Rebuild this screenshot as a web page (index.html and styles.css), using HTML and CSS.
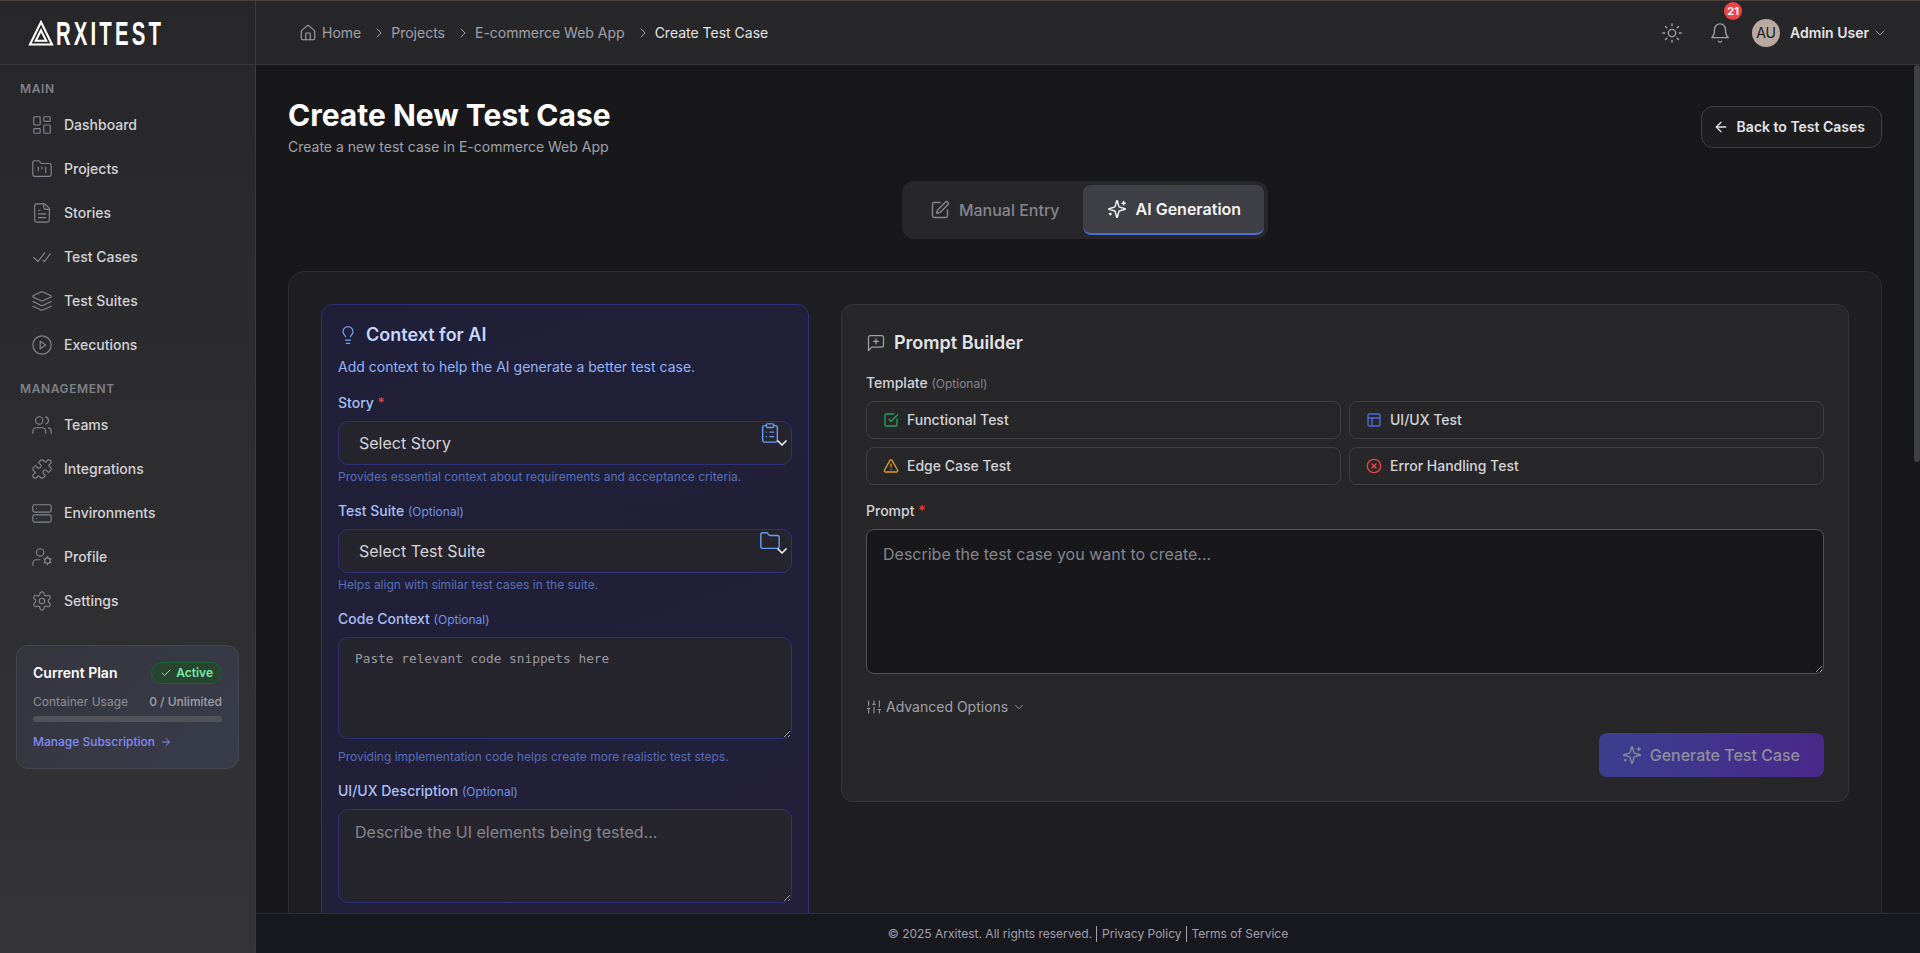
FILE: index.html
```html
<!DOCTYPE html>
<html lang="en">
  <head>
    <meta charset="UTF-8" />
    <meta name="viewport" content="width=device-width, initial-scale=1.0" />
    <title>Create Test Case - Arxitest</title>
    <link rel="stylesheet" href="styles.css">
  </head>
  <body>
    <!-- icon sprite -->
    <svg class="sprite" xmlns="http://www.w3.org/2000/svg">
      <symbol id="i-dashboard" viewBox="0 0 24 24"><rect x="3" y="3" width="7" height="9" rx="1"/><rect x="14" y="3" width="7" height="5" rx="1"/><rect x="14" y="12" width="7" height="9" rx="1"/><rect x="3" y="16" width="7" height="5" rx="1"/></symbol>
      <symbol id="i-projects" viewBox="0 0 24 24"><path d="M4 20h16a2 2 0 0 0 2-2V8a2 2 0 0 0-2-2h-7.93a2 2 0 0 1-1.66-.9l-.82-1.2A2 2 0 0 0 7.93 3H4a2 2 0 0 0-2 2v13c0 1.1.9 2 2 2Z"/><path d="M8 10v4"/><path d="M12 10v2"/><path d="M16 10v6"/></symbol>
      <symbol id="i-file" viewBox="0 0 24 24"><path d="M15 2H6a2 2 0 0 0-2 2v16a2 2 0 0 0 2 2h12a2 2 0 0 0 2-2V7Z"/><path d="M14 2v4a2 2 0 0 0 2 2h4"/><path d="M10 9H8"/><path d="M16 13H8"/><path d="M16 17H8"/></symbol>
      <symbol id="i-checks" viewBox="0 0 24 24"><path d="M15 7.5 7.5 17 3 12.5"/><path d="m21 8.5-6.5 8.5-1.5-1.5"/></symbol>
      <symbol id="i-layers" viewBox="0 0 24 24"><path d="m12.83 2.18a2 2 0 0 0-1.66 0L2.6 6.08a1 1 0 0 0 0 1.83l8.58 3.91a2 2 0 0 0 1.66 0l8.58-3.9a1 1 0 0 0 0-1.83Z"/><path d="m22 17.65-9.17 4.16a2 2 0 0 1-1.66 0L2 17.65"/><path d="m22 12.65-9.17 4.16a2 2 0 0 1-1.66 0L2 12.65"/></symbol>
      <symbol id="i-play" viewBox="0 0 24 24"><circle cx="12" cy="12" r="10"/><polygon points="10 8 16 12 10 16"/></symbol>
      <symbol id="i-users" viewBox="0 0 24 24"><path d="M16 21v-2a4 4 0 0 0-4-4H6a4 4 0 0 0-4 4v2"/><circle cx="9" cy="7" r="4"/><path d="M22 21v-2a4 4 0 0 0-3-3.87"/><path d="M16 3.13a4 4 0 0 1 0 7.75"/></symbol>
      <symbol id="i-puzzle" viewBox="0 0 24 24"><path d="M19.439 7.85c-.049.322.059.648.289.878l1.568 1.568c.47.47.706 1.087.706 1.704s-.235 1.233-.706 1.704l-1.611 1.611a.98.98 0 0 1-.837.276c-.47-.07-.802-.48-.968-.925a2.501 2.501 0 1 0-3.214 3.214c.446.166.855.497.925.968a.979.979 0 0 1-.276.837l-1.61 1.61a2.404 2.404 0 0 1-1.705.707 2.402 2.402 0 0 1-1.704-.706l-1.568-1.568a1.026 1.026 0 0 0-.877-.29c-.493.074-.84.504-1.02.968a2.5 2.5 0 1 1-3.237-3.237c.464-.18.894-.527.967-1.02a1.026 1.026 0 0 0-.289-.877l-1.568-1.568A2.402 2.402 0 0 1 1.998 12c0-.617.236-1.234.706-1.704L4.23 8.77c.24-.24.581-.353.917-.303.515.077.877.528 1.073 1.01a2.5 2.5 0 1 0 3.259-3.259c-.482-.196-.933-.558-1.01-1.073-.05-.336.062-.676.303-.917l1.525-1.525A2.402 2.402 0 0 1 12 1.998c.617 0 1.234.236 1.704.706l1.568 1.568c.23.23.556.338.877.29.493-.074.84-.504 1.02-.968a2.5 2.5 0 1 1 3.237 3.237c-.464.18-.894.527-.967 1.02Z"/></symbol>
      <symbol id="i-server" viewBox="0 0 24 24"><rect x="2" y="3" width="20" height="8" rx="2"/><rect x="2" y="14" width="20" height="8" rx="2"/><path d="M6 7h.01"/><path d="M6 18h.01"/></symbol>
      <symbol id="i-user-cog" viewBox="0 0 24 24"><path d="M2 21v-2a4 4 0 0 1 4-4h4"/><circle cx="10" cy="7" r="4"/><circle cx="18" cy="16" r="3"/><path d="m18 11.5 0 1.5"/><path d="m18 19 0 1.5"/><path d="m14.1 13.8 1.3.7"/><path d="m20.6 17.5 1.3.7"/><path d="m14.1 18.2 1.3-.7"/><path d="m20.6 14.5 1.3-.7"/></symbol>
      <symbol id="i-gear" viewBox="0 0 24 24"><path d="M12.22 2h-.44a2 2 0 0 0-2 2v.18a2 2 0 0 1-1 1.73l-.43.25a2 2 0 0 1-2 0l-.15-.08a2 2 0 0 0-2.73.73l-.22.38a2 2 0 0 0 .73 2.73l.15.1a2 2 0 0 1 1 1.72v.51a2 2 0 0 1-1 1.74l-.15.09a2 2 0 0 0-.73 2.73l.22.38a2 2 0 0 0 2.73.73l.15-.08a2 2 0 0 1 2 0l.43.25a2 2 0 0 1 1 1.73V20a2 2 0 0 0 2 2h.44a2 2 0 0 0 2-2v-.18a2 2 0 0 1 1-1.73l.43-.25a2 2 0 0 1 2 0l.15.08a2 2 0 0 0 2.73-.73l.22-.39a2 2 0 0 0-.73-2.73l-.15-.08a2 2 0 0 1-1-1.74v-.5a2 2 0 0 1 1-1.74l.15-.09a2 2 0 0 0 .73-2.73l-.22-.38a2 2 0 0 0-2.73-.73l-.15.08a2 2 0 0 1-2 0l-.43-.25a2 2 0 0 1-1-1.73V4a2 2 0 0 0-2-2z"/><circle cx="12" cy="12" r="3"/></symbol>
      <symbol id="i-home" viewBox="0 0 24 24"><path d="M15 21v-8a1 1 0 0 0-1-1h-4a1 1 0 0 0-1 1v8"/><path d="M3 10a2 2 0 0 1 .709-1.528l7-5.999a2 2 0 0 1 2.582 0l7 5.999A2 2 0 0 1 21 10v9a2 2 0 0 1-2 2H5a2 2 0 0 1-2-2z"/></symbol>
      <symbol id="i-right" viewBox="0 0 24 24"><path d="m9 18 6-6-6-6"/></symbol>
      <symbol id="i-down" viewBox="0 0 24 24"><path d="m6 9 6 6 6-6"/></symbol>
      <symbol id="i-sun" viewBox="0 0 24 24"><circle cx="12" cy="12" r="4"/><path d="M12 2v2"/><path d="M12 20v2"/><path d="m4.93 4.93 1.41 1.41"/><path d="m17.66 17.66 1.41 1.41"/><path d="M2 12h2"/><path d="M20 12h2"/><path d="m6.34 17.66-1.41 1.41"/><path d="m19.07 4.93-1.41 1.41"/></symbol>
      <symbol id="i-bell" viewBox="0 0 24 24"><path d="M6 8a6 6 0 0 1 12 0c0 7 3 9 3 9H3s3-2 3-9"/><path d="M10.3 21a1.94 1.94 0 0 0 3.4 0"/></symbol>
      <symbol id="i-check" viewBox="0 0 24 24"><path d="M20 6 9 17l-5-5"/></symbol>
      <symbol id="i-arrow-right" viewBox="0 0 24 24"><path d="M5 12h14"/><path d="m12 5 7 7-7 7"/></symbol>
      <symbol id="i-arrow-left" viewBox="0 0 24 24"><path d="m12 19-7-7 7-7"/><path d="M19 12H5"/></symbol>
      <symbol id="i-pen" viewBox="0 0 24 24"><path d="M12 3H5a2 2 0 0 0-2 2v14a2 2 0 0 0 2 2h14a2 2 0 0 0 2-2v-7"/><path d="M18.375 2.625a1 1 0 0 1 3 3l-9.013 9.014a2 2 0 0 1-.853.505l-2.873.84a.5.5 0 0 1-.62-.62l.84-2.873a2 2 0 0 1 .506-.852z"/></symbol>
      <symbol id="i-sparkles" viewBox="0 0 24 24"><path d="M9.937 15.5A2 2 0 0 0 8.5 14.063l-6.135-1.582a.5.5 0 0 1 0-.962L8.5 9.936A2 2 0 0 0 9.937 8.5l1.582-6.135a.5.5 0 0 1 .963 0L14.063 8.5A2 2 0 0 0 15.5 9.937l6.135 1.581a.5.5 0 0 1 0 .964L15.5 14.063a2 2 0 0 0-1.437 1.437l-1.582 6.135a.5.5 0 0 1-.963 0z"/><path d="M20 3v4"/><path d="M22 5h-4"/><path d="M4 17v2"/><path d="M5 18H3"/></symbol>
      <symbol id="i-bulb" viewBox="0 0 24 24"><path d="M15 14c.2-1 .7-1.7 1.5-2.5 1-.9 1.5-2.2 1.5-3.5A6 6 0 0 0 6 8c0 1 .2 2.2 1.5 3.5.7.7 1.3 1.5 1.5 2.5"/><path d="M9 18h6"/><path d="M10 22h4"/></symbol>
      <symbol id="i-clipboard" viewBox="0 0 24 24"><rect x="8" y="2" width="8" height="4" rx="1"/><path d="M16 4h2a2 2 0 0 1 2 2v14a2 2 0 0 1-2 2H6a2 2 0 0 1-2-2V6a2 2 0 0 1 2-2h2"/><path d="M12 11h4"/><path d="M12 16h4"/><path d="M8 11h.01"/><path d="M8 16h.01"/></symbol>
      <symbol id="i-folder" viewBox="0 0 24 24"><path d="M20 20a2 2 0 0 0 2-2V8a2 2 0 0 0-2-2h-7.9a2 2 0 0 1-1.69-.9L9.6 3.9A2 2 0 0 0 7.93 3H4a2 2 0 0 0-2 2v13a2 2 0 0 0 2 2Z"/></symbol>
      <symbol id="i-message" viewBox="0 0 24 24"><path d="M21 15a2 2 0 0 1-2 2H7l-4 4V5a2 2 0 0 1 2-2h14a2 2 0 0 1 2 2z"/><path d="M12 7v6"/><path d="M9 10h6"/></symbol>
      <symbol id="i-square-check" viewBox="0 0 24 24"><path d="M21 10.5V19a2 2 0 0 1-2 2H5a2 2 0 0 1-2-2V5a2 2 0 0 1 2-2h11"/><path d="m9 11 3 3L22 4"/></symbol>
      <symbol id="i-layout" viewBox="0 0 24 24"><rect x="3" y="3" width="18" height="18" rx="2"/><path d="M3 9h18"/><path d="M9 21V9"/></symbol>
      <symbol id="i-alert" viewBox="0 0 24 24"><path d="m21.73 18-8-14a2 2 0 0 0-3.48 0l-8 14A2 2 0 0 0 4 21h16a2 2 0 0 0 1.73-3"/><path d="M12 9v4"/><path d="M12 17h.01"/></symbol>
      <symbol id="i-circle-x" viewBox="0 0 24 24"><circle cx="12" cy="12" r="10"/><path d="m15 9-6 6"/><path d="m9 9 6 6"/></symbol>
      <symbol id="i-sliders" viewBox="0 0 24 24"><path d="M4 21v-7"/><path d="M4 10V3"/><path d="M12 21v-9"/><path d="M12 8V3"/><path d="M20 21v-5"/><path d="M20 12V3"/><path d="M2 14h4"/><path d="M10 8h4"/><path d="M18 16h4"/></symbol>
    </svg>

    <div class="topline"></div>
    <div class="app">
      <aside class="sidebar">
        <div class="logo">
          <svg class="logo-mark" viewBox="0 0 24 25">
            <path d="M12 2 22.6 23.5H1.4Z" />
            <path d="M12 10 17 20H7Z" />
          </svg>
          <span class="logo-text">RXITEST</span>
        </div>
        <nav class="nav">
          <div class="nav-title">Main</div>
          <a class="nav-item"><svg class="nav-icon"><use href="#i-dashboard"/></svg>Dashboard</a>
          <a class="nav-item"><svg class="nav-icon"><use href="#i-projects"/></svg>Projects</a>
          <a class="nav-item"><svg class="nav-icon"><use href="#i-file"/></svg>Stories</a>
          <a class="nav-item"><svg class="nav-icon"><use href="#i-checks"/></svg>Test Cases</a>
          <a class="nav-item"><svg class="nav-icon"><use href="#i-layers"/></svg>Test Suites</a>
          <a class="nav-item"><svg class="nav-icon"><use href="#i-play"/></svg>Executions</a>
          <div class="nav-title second">Management</div>
          <a class="nav-item"><svg class="nav-icon"><use href="#i-users"/></svg>Teams</a>
          <a class="nav-item"><svg class="nav-icon"><use href="#i-puzzle"/></svg>Integrations</a>
          <a class="nav-item"><svg class="nav-icon"><use href="#i-server"/></svg>Environments</a>
          <a class="nav-item"><svg class="nav-icon"><use href="#i-user-cog"/></svg>Profile</a>
          <a class="nav-item"><svg class="nav-icon"><use href="#i-gear"/></svg>Settings</a>
        </nav>
        <div class="plan">
          <div class="plan-head">
            <span class="plan-name">Current Plan</span>
            <span class="plan-badge"><svg class="icon-12"><use href="#i-check"/></svg>Active</span>
          </div>
          <div class="plan-usage">
            <span>Container Usage</span>
            <span class="plan-count">0 / Unlimited</span>
          </div>
          <div class="plan-bar"></div>
          <a class="plan-link">Manage Subscription <svg class="icon-12"><use href="#i-arrow-right"/></svg></a>
        </div>
      </aside>

      <div class="content">
        <header class="topbar">
          <div class="crumbs">
            <svg class="crumb-home"><use href="#i-home"/></svg>
            <a>Home</a>
            <svg class="crumb-sep"><use href="#i-right"/></svg>
            <a>Projects</a>
            <svg class="crumb-sep"><use href="#i-right"/></svg>
            <a>E-commerce Web App</a>
            <svg class="crumb-sep"><use href="#i-right"/></svg>
            <span class="crumb-current">Create Test Case</span>
          </div>
          <div class="topbar-right">
            <svg class="top-icon"><use href="#i-sun"/></svg>
            <div class="bell">
              <svg class="top-icon"><use href="#i-bell"/></svg>
              <span class="bell-badge">21</span>
            </div>
            <div class="user">
              <span class="avatar">AU</span>
              <span class="user-name">Admin User</span>
              <svg class="user-caret"><use href="#i-down"/></svg>
            </div>
          </div>
        </header>

        <main class="main">
          <div class="scroll-thumb"></div>
          <div class="page-head">
            <div>
              <h1>Create New Test Case</h1>
              <p class="page-sub">Create a new test case in E-commerce Web App</p>
            </div>
            <a class="back-btn"><svg class="icon-16"><use href="#i-arrow-left"/></svg>Back to Test Cases</a>
          </div>

          <div class="tabs-wrap">
            <div class="tabs">
              <button class="tab"><svg class="icon-20"><use href="#i-pen"/></svg>Manual Entry</button>
              <button class="tab active"><svg class="icon-20"><use href="#i-sparkles"/></svg>AI Generation</button>
            </div>
          </div>

          <section class="card">
            <div class="context">
              <h2><svg class="icon-20"><use href="#i-bulb"/></svg>Context for AI</h2>
              <p class="context-intro">Add context to help the AI generate a better test case.</p>

              <label class="ctx-label first">Story <span class="req">*</span></label>
              <div class="select-wrap">
                <select class="ctx-select"><option>Select Story</option></select>
                <svg class="select-icon"><use href="#i-clipboard"/></svg>
                <svg class="select-caret"><use href="#i-down"/></svg>
              </div>
              <p class="help">Provides essential context about requirements and acceptance criteria.</p>

              <label class="ctx-label">Test Suite <small>(Optional)</small></label>
              <div class="select-wrap">
                <select class="ctx-select"><option>Select Test Suite</option></select>
                <svg class="select-icon"><use href="#i-folder"/></svg>
                <svg class="select-caret"><use href="#i-down"/></svg>
              </div>
              <p class="help">Helps align with similar test cases in the suite.</p>

              <label class="ctx-label">Code Context <small>(Optional)</small></label>
              <textarea class="ctx-area code" placeholder="Paste relevant code snippets here"></textarea>
              <p class="help after-area">Providing implementation code helps create more realistic test steps.</p>

              <label class="ctx-label">UI/UX Description <small>(Optional)</small></label>
              <textarea class="ctx-area ui" placeholder="Describe the UI elements being tested..."></textarea>
            </div>

            <div class="builder">
              <h2><svg class="icon-20"><use href="#i-message"/></svg>Prompt Builder</h2>
              <label class="b-label">Template <small>(Optional)</small></label>
              <div class="templates">
                <button class="template"><svg class="icon-16 green"><use href="#i-square-check"/></svg>Functional Test</button>
                <button class="template"><svg class="icon-16 blue"><use href="#i-layout"/></svg>UI/UX Test</button>
                <button class="template"><svg class="icon-16 amber"><use href="#i-alert"/></svg>Edge Case Test</button>
                <button class="template"><svg class="icon-16 red"><use href="#i-circle-x"/></svg>Error Handling Test</button>
              </div>
              <label class="b-label prompt">Prompt <span class="req">*</span></label>
              <textarea class="prompt-area" placeholder="Describe the test case you want to create..."></textarea>
              <a class="advanced"><svg class="icon-16"><use href="#i-sliders"/></svg>Advanced Options<svg class="icon-14"><use href="#i-down"/></svg></a>
              <div class="actions">
                <button class="generate"><svg class="icon-20"><use href="#i-sparkles"/></svg>Generate Test Case</button>
              </div>
            </div>
          </section>
        </main>

        <footer class="footer">
          © 2025 Arxitest. All rights reserved.
          <a>Privacy Policy</a>
          <a>Terms of Service</a>
        </footer>
      </div>
    </div>
  </body>
</html>
```

FILE: styles.css
```css
* {
  box-sizing: border-box;
}
html, body {
  height: 100%;
}
body {
  margin: 0;
  overflow: hidden;
  font-family: Inter, "Noto Sans", sans-serif;
  font-size: 14px;
  line-height: 20px;
  background-color: #18181b;
  color: #e4e4e7;
  display: flex;
  flex-direction: column;
}
h1, h2, p {
  margin: 0;
}
svg {
  flex: none;
  fill: none;
  stroke: currentColor;
  stroke-width: 2;
  stroke-linecap: round;
  stroke-linejoin: round;
}
.sprite {
  display: none;
}
.icon-12 { width: 12px; height: 12px; }
.icon-14 { width: 14px; height: 14px; }
.icon-16 { width: 16px; height: 16px; }
.icon-20 { width: 20px; height: 20px; }
.green { color: #22a35a; }
.blue { color: #4f6bd8; }
.amber { color: #e19a1f; }
.red { color: #ef4444; }

.topline {
  height: 1px;
  flex: none;
  background-color: #4c3f3d;
}
.app {
  flex: 1;
  min-height: 0;
  display: flex;
}

/* sidebar */
.sidebar {
  width: 256px;
  flex: none;
  display: flex;
  flex-direction: column;
  background: linear-gradient(180deg, #27272a 0%, #343436 100%);
  border-right: 1px solid #3a3a3e;
}
.logo {
  height: 64px;
  flex: none;
  display: flex;
  align-items: center;
  padding: 0 0 0 28px;
  border-bottom: 1px solid #36363a;
}
.logo-mark {
  width: 26px;
  height: 26px;
  color: #fff;
  stroke-width: 2;
  stroke-linecap: butt;
  stroke-linejoin: miter;
}
.logo-text {
  display: inline-block;
  margin-left: 2px;
  font-family: "Liberation Sans", sans-serif;
  font-size: 34px;
  line-height: 34px;
  font-weight: 700;
  letter-spacing: 5.2px;
  color: #fff;
  transform: scaleX(0.6);
  transform-origin: left center;
}
.nav {
  padding: 16px 0 0 20px;
}
.nav-title {
  font-size: 12px;
  line-height: 16px;
  font-weight: 600;
  letter-spacing: 0.05em;
  text-transform: uppercase;
  color: #80808a;
  margin-bottom: 6px;
}
.nav-title.second {
  margin-top: 14px;
}
.nav-item {
  height: 44px;
  display: flex;
  align-items: center;
  gap: 11px;
  padding-left: 11px;
  font-weight: 500;
  color: #d4d4d8;
}
.nav-icon {
  width: 22px;
  height: 22px;
  color: #85858e;
  stroke-width: 1.25;
}

/* plan box */
.plan {
  margin: 22px 16px 0;
  padding: 16px;
  height: 124px;
  border: 1px solid #45454f;
  border-radius: 12px;
  background: linear-gradient(135deg, #35353d 0%, #383c4a 100%);
}
.plan-head {
  display: flex;
  justify-content: space-between;
  align-items: center;
  height: 22px;
}
.plan-name {
  font-weight: 600;
  font-size: 14px;
  color: #fff;
}
.plan-badge {
  display: flex;
  align-items: center;
  gap: 4px;
  height: 22px;
  padding: 0 8px;
  border: 1px solid #166534;
  border-radius: 11px;
  background-color: #28452f;
  font-size: 12px;
  font-weight: 600;
  color: #74eba6;
}
.plan-usage {
  display: flex;
  justify-content: space-between;
  margin-top: 10px;
  font-size: 12px;
  line-height: 16px;
  color: #8f8f98;
}
.plan-count {
  font-weight: 500;
  color: #a1a1aa;
}
.plan-bar {
  height: 6px;
  margin-top: 6px;
  border-radius: 3px;
  background-color: #52525b;
}
.plan-link {
  display: flex;
  align-items: center;
  gap: 5px;
  margin-top: 12px;
  font-size: 12px;
  line-height: 16px;
  font-weight: 500;
  color: #818cf8;
}

/* top bar */
.content {
  flex: 1;
  min-width: 0;
  display: flex;
  flex-direction: column;
}
.topbar {
  height: 64px;
  flex: none;
  display: flex;
  align-items: center;
  justify-content: space-between;
  padding: 0 32px 0 43px;
  background-color: #27272a;
  border-bottom: 1px solid #36363a;
}
.crumbs {
  display: flex;
  align-items: center;
  color: #a1a1aa;
}
.crumb-home {
  width: 18px;
  height: 18px;
  margin-right: 5px;
  stroke-width: 1.5;
}
.crumb-sep {
  width: 16px;
  height: 16px;
  margin: 0 4px 0 10px;
  stroke-width: 1.5;
}
.crumb-current {
  color: #e4e4e7;
}
.topbar-right {
  display: flex;
  align-items: center;
}
.top-icon {
  display: block;
  width: 22px;
  height: 22px;
  color: #a1a1aa;
  stroke-width: 1.5;
}
.bell {
  position: relative;
  margin-left: 26px;
}
.bell-badge {
  position: absolute;
  top: -20px;
  left: 15px;
  width: 18px;
  height: 18px;
  border-radius: 50%;
  background-color: #ef4444;
  color: #fff;
  font-size: 11px;
  line-height: 18px;
  font-weight: 700;
  text-align: center;
}
.user {
  display: flex;
  align-items: center;
  margin-left: 21px;
}
.avatar {
  width: 28px;
  height: 28px;
  border-radius: 50%;
  background-color: #b9a9a0;
  color: #18181b;
  font-size: 14px;
  line-height: 28px;
  text-align: center;
}
.user-name {
  margin-left: 10px;
  font-weight: 600;
  color: #e4e4e7;
}
.user-caret {
  width: 16px;
  height: 16px;
  margin-left: 3px;
  color: #a1a1aa;
  stroke-width: 1.5;
}

/* main */
.main {
  position: relative;
  flex: 1;
  min-height: 0;
  overflow: hidden;
  padding: 32px 38px 0 32px;
  background-color: #18181b;
}
.scroll-thumb {
  position: absolute;
  top: 0;
  right: 0;
  width: 6px;
  height: 397px;
  border-radius: 3px;
  background-color: #3f3f46;
}
.page-head {
  display: flex;
  justify-content: space-between;
  align-items: center;
}
h1 {
  font-size: 30px;
  line-height: 36px;
  font-weight: 700;
  color: #fff;
}
.page-sub {
  margin-top: 4px;
  color: #a1a1aa;
}
.back-btn {
  display: flex;
  align-items: center;
  gap: 8px;
  height: 42px;
  padding: 0 16px 0 11px;
  border: 1px solid #3f3f46;
  border-radius: 12px;
  background-color: #1d1d20;
  font-weight: 600;
  color: #e4e4e7;
}
.tabs-wrap {
  display: flex;
  justify-content: center;
  margin-top: 24px;
}
.tabs {
  display: flex;
  padding: 4px;
  border-radius: 12px;
  background-color: #27272a;
}
.tab {
  display: flex;
  align-items: center;
  gap: 9px;
  height: 50px;
  padding: 0 23px 0 24px;
  border: none;
  border-radius: 8px;
  background: none;
  font-family: inherit;
  font-size: 16px;
  font-weight: 500;
  color: #85858e;
}
.tab svg {
  stroke-width: 1.75;
}
.tab.active {
  background-color: #3f3f46;
  border-bottom: 2px solid #4f6bd8;
  color: #f4f4f5;
  font-weight: 600;
}

/* main card */
.card {
  margin-top: 32px;
  min-height: 900px;
  padding: 32px;
  display: grid;
  grid-template-columns: 488px 1fr;
  gap: 32px;
  align-items: start;
  border: 1px solid #2c2c30;
  border-radius: 16px;
  background-color: #1f1f23;
}

/* left panel */
.context {
  min-height: 800px;
  padding: 16px;
  border: 1px solid #30307a;
  border-radius: 12px;
  background: linear-gradient(160deg, #1f2038 0%, #251f39 100%);
}
.context h2 {
  display: flex;
  align-items: center;
  gap: 8px;
  font-size: 18px;
  line-height: 28px;
  font-weight: 600;
  color: #c7d7fe;
}
.context h2 svg {
  color: #7aa2f7;
  stroke-width: 1.5;
}
.context-intro {
  margin-top: 8px;
  color: #93b4fb;
}
.ctx-label {
  display: block;
  height: 20px;
  margin-top: 16px;
  font-weight: 500;
  color: #a8c0f5;
}
.ctx-label small {
  font-size: 12px;
  font-weight: 400;
  color: #6f92e6;
}
.req {
  color: #e53e3e;
}
.select-wrap {
  position: relative;
  margin-top: 8px;
}
.ctx-select {
  display: block;
  width: 100%;
  height: 44px;
  padding: 0 20px;
  appearance: none;
  border: 1px solid #30307a;
  border-radius: 10px;
  background-color: #26252d;
  font-family: inherit;
  font-size: 16px;
  color: #d4d4d8;
}
.select-icon {
  position: absolute;
  top: 1px;
  right: 11px;
  width: 22px;
  height: 22px;
  color: #6b9cf5;
  stroke-width: 1.5;
}
.select-caret {
  position: absolute;
  top: 14px;
  right: 2px;
  width: 16px;
  height: 16px;
  color: #f4f4f5;
  stroke-width: 2.5;
}
.help {
  margin-top: 4px;
  font-size: 12px;
  line-height: 16px;
  color: #566fb8;
}
.help.after-area {
  margin-top: 10px;
}
.ctx-area {
  display: block;
  width: 100%;
  margin-top: 8px;
  padding: 10px 16px;
  border: 1px solid #30307a;
  border-radius: 10px;
  outline: none;
  background-color: #26252d;
  color: #d4d4d8;
  font-family: inherit;
  font-size: 16px;
  line-height: 24px;
}
.ctx-area::placeholder,
.prompt-area::placeholder {
  color: #85858e;
  opacity: 1;
}
.ctx-area.code {
  height: 102px;
  padding-top: 11px;
  font-family: "DejaVu Sans Mono", monospace;
  font-size: 12.8px;
  line-height: 20px;
}
.ctx-area.code::placeholder {
  color: #9a9aa2;
}
.ctx-area.ui {
  height: 94px;
}

/* right panel */
.builder {
  padding: 24px;
  border: 1px solid #36363a;
  border-radius: 12px;
  background-color: #27272a;
}
.builder h2 {
  display: flex;
  align-items: center;
  gap: 8px;
  font-size: 18px;
  line-height: 28px;
  font-weight: 600;
  color: #e4e4e7;
}
.builder h2 svg {
  color: #a1a1aa;
  stroke-width: 1.5;
}
.b-label {
  display: block;
  height: 20px;
  margin-top: 16px;
  font-weight: 500;
  color: #d4d4d8;
}
.b-label small {
  font-size: 12px;
  font-weight: 400;
  color: #85858e;
}
.b-label.prompt {
  margin-top: 16px;
}
.templates {
  display: grid;
  grid-template-columns: 1fr 1fr;
  gap: 8px;
  margin-top: 8px;
}
.template {
  display: flex;
  align-items: center;
  gap: 8px;
  height: 38px;
  padding: 0 16px 1px;
  border: 1px solid #3f3f46;
  border-radius: 8px;
  background: none;
  font-family: inherit;
  font-size: 14px;
  font-weight: 500;
  color: #d4d4d8;
}
.prompt-area {
  display: block;
  width: 100%;
  height: 145px;
  margin-top: 8px;
  padding: 12px 16px;
  border: 1px solid #52525b;
  border-radius: 8px;
  outline: none;
  background-color: #18181b;
  color: #d4d4d8;
  font-family: inherit;
  font-size: 16px;
  line-height: 24px;
}
.advanced {
  display: flex;
  align-items: center;
  gap: 4px;
  margin-top: 23px;
  color: #a1a1aa;
}
.advanced svg {
  stroke-width: 1.5;
}
.actions {
  display: flex;
  justify-content: flex-end;
  margin-top: 16px;
}
.generate {
  display: flex;
  align-items: center;
  gap: 8px;
  height: 44px;
  padding: 0 24px 0 23px;
  border: none;
  border-radius: 8px;
  background: linear-gradient(90deg, #3b3f8f 0%, #49288a 100%);
  font-family: inherit;
  font-size: 16px;
  font-weight: 500;
  color: #8f8f9a;
}
.generate svg {
  stroke-width: 1.5;
}

/* footer */
.footer {
  height: 40px;
  flex: none;
  display: flex;
  align-items: center;
  justify-content: center;
  font-size: 12px;
  color: #a1a1aa;
  background-color: #18181f;
  border-top: 1px solid #2e2e33;
}
.footer a {
  margin-left: 4px;
  padding-left: 5px;
  border-left: 1px solid #a1a1aa;
  line-height: 16px;
}
```
